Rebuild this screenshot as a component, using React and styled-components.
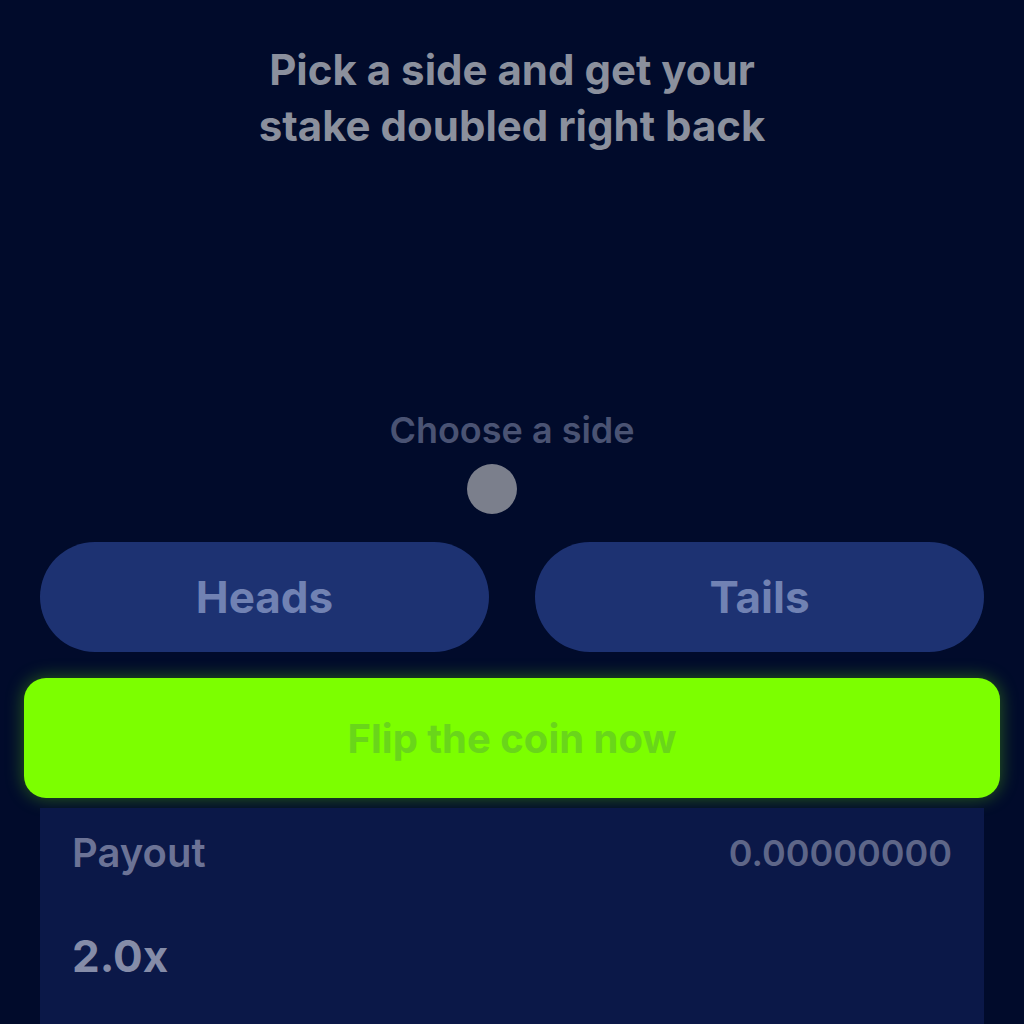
import React from 'react';
import styled, { createGlobalStyle } from 'styled-components';

const Global = createGlobalStyle`
  html, body {
    margin: 0;
    padding: 0;
    background: #010b2b;
    font-family: Inter, "Noto Sans", sans-serif;
  }
`;

export default function App() {
  return (
    <>
      <Global />
      <Page>
        <Title>
          Pick a side and get your
          <br />
          stake doubled right back
        </Title>

        <Picker>
          <Label>Choose a side</Label>
          <Dot />
        </Picker>

        <Choices>
          <Choice>Heads</Choice>
          <Choice>Tails</Choice>
        </Choices>

        <Flip>Flip the coin now</Flip>

        <Panel>
          <Row>
            <Key>Payout</Key>
            <Value>0.00000000</Value>
          </Row>
          <Badge>2.0x</Badge>
        </Panel>
      </Page>
    </>
  );
}

const Page = styled.div`
  min-height: 1024px;
  display: flex;
  flex-direction: column;
  align-items: stretch;
  padding-top: 42px;
  box-sizing: border-box;
`;

const Title = styled.h1`
  margin: 0 auto;
  text-align: center;
  font-size: 42px;
  line-height: 56px;
  font-weight: 700;
  color: #8b909d;
`;

const Picker = styled.div`
  margin-top: 254px;
  display: flex;
  flex-direction: column;
  align-items: center;
  gap: 12px;
`;

const Label = styled.div`
  font-size: 36px;
  font-weight: 600;
  color: #4a5373;
  line-height: 44px;
`;

const Dot = styled.div`
  width: 50px;
  height: 50px;
  border-radius: 50%;
  background: #7b7f8c;
  margin-left: -40px;
`;

const Choices = styled.div`
  margin-top: 28px;
  padding: 0 40px;
  display: grid;
  grid-template-columns: 1fr 1fr;
  gap: 46px;
`;

const Choice = styled.button`
  height: 110px;
  border: none;
  border-radius: 55px;
  background: #1d3272;
  color: #7182b3;
  font-family: inherit;
  font-size: 44px;
  font-weight: 700;
`;

const Flip = styled.button`
  margin: 26px 24px 0;
  height: 120px;
  border: none;
  border-radius: 22px;
  background: #7cff00;
  color: #69d61a;
  font-family: inherit;
  font-size: 40px;
  font-weight: 700;
  box-shadow: 0 0 18px rgba(124, 255, 0, 0.35);
`;

const Panel = styled.div`
  flex: 1;
  margin: 10px 40px 0;
  background: #0b1848;
  padding: 20px 32px;
  display: flex;
  flex-direction: column;
  gap: 52px;
`;

const Row = styled.div`
  display: flex;
  justify-content: space-between;
  align-items: center;
`;

const Key = styled.div`
  font-size: 40px;
  font-weight: 600;
  color: #6c7396;
`;

const Value = styled.div`
  font-size: 36px;
  font-weight: 600;
  color: #5e6688;
`;

const Badge = styled.div`
  align-self: flex-start;
  font-size: 44px;
  font-weight: 700;
  color: #858ca8;
`;
